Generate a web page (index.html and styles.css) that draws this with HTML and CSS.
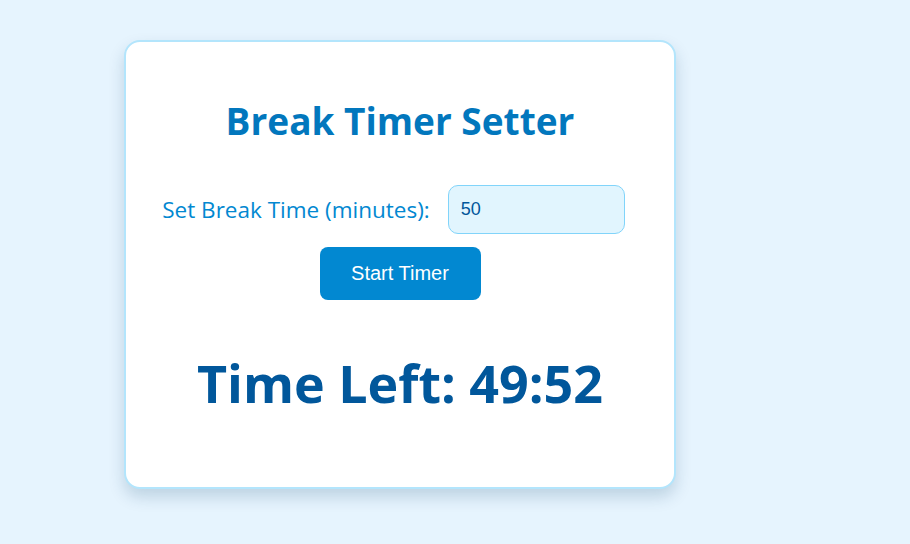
FILE: index.html
```html
<!DOCTYPE html>
<html>
<head>
<meta charset="utf-8">
<link rel="stylesheet" href="styles.css">
</head>
<body>
<div class="page">
  <div class="card">
    <h1 class="title">Break Timer Setter</h1>
    <div class="row">
      <label class="label" for="mins">Set Break Time (minutes):</label>
      <input class="input" id="mins" type="text" value="50">
    </div>
    <button class="btn">Start Timer</button>
    <div class="time">Time Left: 49:52</div>
  </div>
</div>
</body>
</html>
```
FILE: styles.css
```css
html, body {
  margin: 0;
  padding: 0;
  background: #e6f4fe;
  height: 100%;
}
.page {
  padding: 40px 0 0 124px;
}
.card {
  box-sizing: border-box;
  width: 552px;
  height: 449px;
  background: #ffffff;
  border: 2px solid #b3e5fc;
  border-radius: 16px;
  box-shadow: 0 8px 16px rgba(0, 60, 100, 0.18);
  display: flex;
  flex-direction: column;
  align-items: center;
  font-family: "Open Sans", sans-serif;
}
.title {
  margin: 54px 0 0 0;
  font-size: 37px;
  line-height: 50px;
  font-weight: 700;
  color: #0277bd;
}
.row {
  margin-top: 39px;
  display: flex;
  align-items: center;
  gap: 18px;
  padding-right: 13px;
}
.label {
  font-size: 22.5px;
  color: #0288d1;
}
.input {
  box-sizing: border-box;
  width: 177px;
  height: 49px;
  padding: 0 12px;
  background: #e1f5fe;
  border: 1px solid #81d4fa;
  border-radius: 10px;
  font-family: "Liberation Sans", Arial, sans-serif;
  font-size: 18px;
  color: #01579b;
  outline: none;
}
.btn {
  margin-top: 13px;
  width: 161px;
  height: 53px;
  background: #0288d1;
  color: #ffffff;
  border: none;
  border-radius: 8px;
  font-family: "Liberation Sans", Arial, sans-serif;
  font-size: 20px;
}
.time {
  margin-top: 51px;
  font-size: 52px;
  line-height: 64px;
  font-weight: 700;
  color: #01579b;
}
```
